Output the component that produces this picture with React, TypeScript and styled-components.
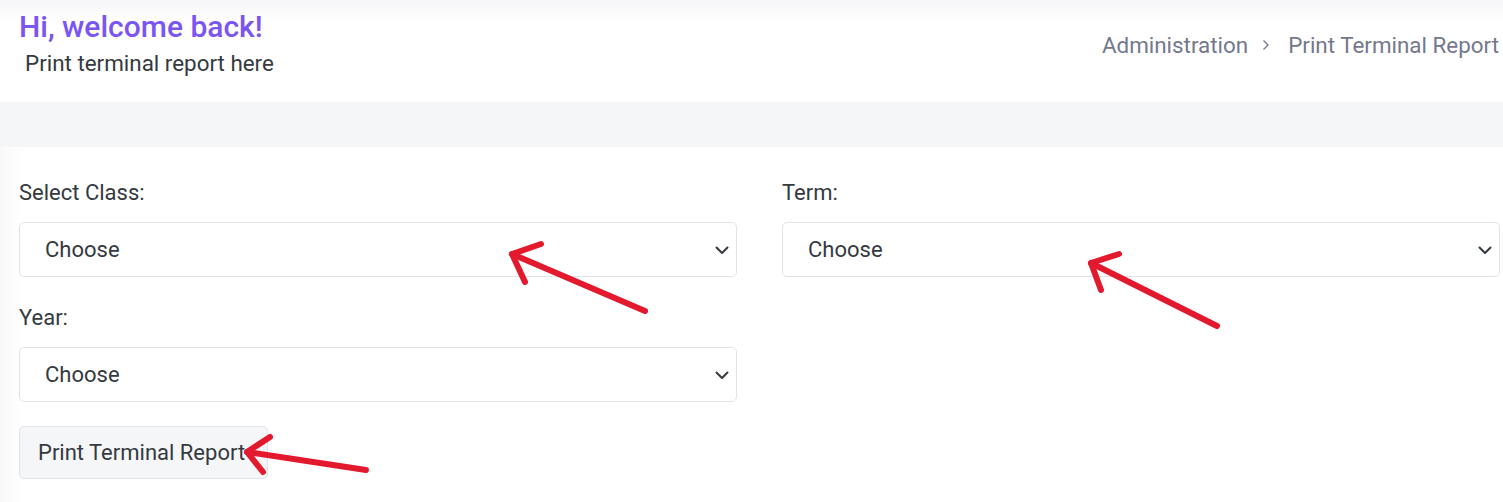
import styled, { createGlobalStyle } from "styled-components";

const GlobalStyle = createGlobalStyle`
    html, body {
        margin: 0;
        padding: 0;
        background: #ffffff;
    }
    body {
        font-family: Roboto, "Liberation Sans", sans-serif;
        color: #343a40;
    }
`
const PageDiv = styled.div`
    position: relative;
    width: 1503px;
    height: 502px;
    overflow: hidden;
    background: #ffffff;
    box-shadow: inset 30px 0 26px -24px rgba(0, 0, 0, 0.045);
`
const HeaderDiv = styled.div`
    display: flex;
    justify-content: space-between;
    align-items: flex-start;
    height: 102px;
    padding: 0 4px 0 19px;
    box-sizing: border-box;
    background: linear-gradient(180deg, #f6f6f8 0px, #ffffff 22px);
`
const TitleDiv = styled.div`
    display: flex;
    flex-direction: column;
    gap: 3px;
    padding-top: 8px;
`
const TitleSpan = styled.span`
    font-size: 30px;
    font-weight: 500;
    line-height: 38px;
    color: #7b55f3;
`
const SubtitleSpan = styled.span`
    font-size: 22.4px;
    line-height: 28px;
    color: #343a40;
    margin-left: 6px;
`
const Breadcrumb = styled.nav`
    display: flex;
    align-items: center;
    gap: 13px;
    margin-top: 31px;
    font-size: 22.4px;
    line-height: 28px;
    color: #74788d;
`
const CrumbSeparator = styled.svg`
    margin-right: 4px;
`
const BandDiv = styled.div`
    height: 45px;
    background: #f5f6f8;
`
const FormDiv = styled.div`
    display: grid;
    grid-template-columns: 718px 718px;
    column-gap: 45px;
    row-gap: 27px;
    padding: 32px 4px 0 19px;
`
const FieldDiv = styled.div`
    display: flex;
    flex-direction: column;
    gap: 15px;
`
const LabelSpan = styled.label`
    font-size: 22px;
    line-height: 28px;
    color: #343a40;
`
const SelectBox = styled.div`
    display: flex;
    align-items: center;
    justify-content: space-between;
    height: 55px;
    box-sizing: border-box;
    padding: 0 6px 0 25px;
    border: 1px solid #e2e3e6;
    border-radius: 5px;
    background: #ffffff;
    font-size: 22px;
    color: #343a40;
`
const ButtonRow = styled.div`
    grid-column: 1 / 3;
    margin-top: -3px;
`
const PrintButton = styled.button`
    height: 53px;
    padding: 0 22px 0 18px;
    border: 1px solid #e2e3e6;
    border-radius: 5px;
    background: #f5f6f8;
    font-family: Roboto, "Liberation Sans", sans-serif;
    font-size: 22px;
    color: #343a40;
`
const ArrowSvg = styled.svg`
    position: absolute;
    left: 0;
    top: 0;
    pointer-events: none;
`

const Chevron = () => (
    <svg width="16" height="16" viewBox="0 0 16 16">
        <path d="M2.5 5.5 L8 11 L13.5 5.5" fill="none" stroke="#343a40" strokeWidth="2" strokeLinecap="round" strokeLinejoin="round" />
    </svg>
)

const Select = ({ label }: { label: string }) => (
    <FieldDiv>
        <LabelSpan>{label}</LabelSpan>
        <SelectBox>
            Choose
            <Chevron />
        </SelectBox>
    </FieldDiv>
)

// annotation arrows: tip, two arm ends, tail
const arrows = [
    { tip: [512, 254], a: [541, 244], b: [525, 282], tail: [645, 311] },
    { tip: [1091, 263], a: [1119, 254], b: [1101, 290], tail: [1217, 326] },
    { tip: [247, 452], a: [270, 437], b: [263, 472], tail: [366, 470] },
]

export default function App() {
    return (
        <>
            <GlobalStyle />
            <PageDiv>
                <HeaderDiv>
                    <TitleDiv>
                        <TitleSpan>Hi, welcome back!</TitleSpan>
                        <SubtitleSpan>Print terminal report here</SubtitleSpan>
                    </TitleDiv>
                    <Breadcrumb>
                        <span>Administration</span>
                        <CrumbSeparator width="10" height="14" viewBox="0 0 10 14">
                            <path d="M2.5 2.5 L7 7 L2.5 11.5" fill="none" stroke="#74788d" strokeWidth="1.3" />
                        </CrumbSeparator>
                        <span>Print Terminal Report</span>
                    </Breadcrumb>
                </HeaderDiv>
                <BandDiv />
                <FormDiv>
                    <Select label="Select Class:" />
                    <Select label="Term:" />
                    <Select label="Year:" />
                    <div />
                    <ButtonRow>
                        <PrintButton>Print Terminal Report</PrintButton>
                    </ButtonRow>
                </FormDiv>
                <ArrowSvg width="1503" height="502">
                    {arrows.map((ar, i) => (
                        <g key={i} fill="none" stroke="#e3192d" strokeWidth="6" strokeLinecap="round" strokeLinejoin="round">
                            <path d={`M${ar.tail[0]} ${ar.tail[1]} L${ar.tip[0]} ${ar.tip[1]}`} />
                            <path d={`M${ar.a[0]} ${ar.a[1]} L${ar.tip[0]} ${ar.tip[1]} L${ar.b[0]} ${ar.b[1]}`} />
                        </g>
                    ))}
                </ArrowSvg>
            </PageDiv>
        </>
    )
}
